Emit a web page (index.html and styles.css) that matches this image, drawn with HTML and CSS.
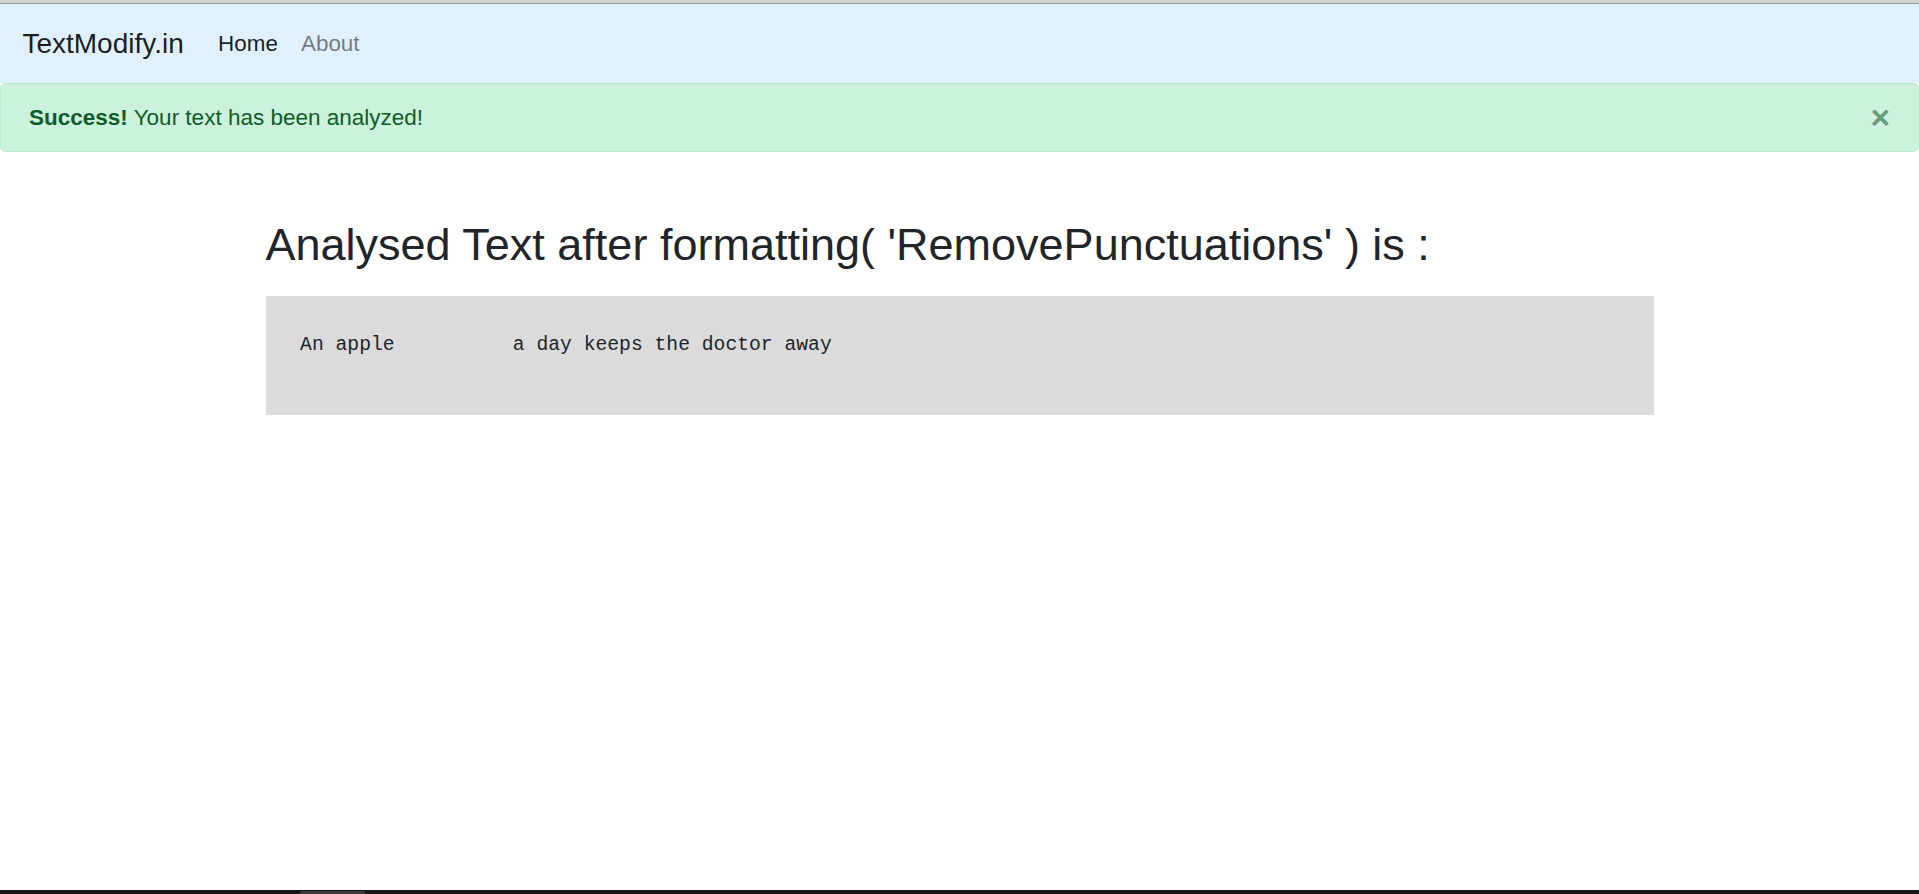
FILE: index.html
```html
<!DOCTYPE html>
<html lang="en">
<head>
<meta charset="utf-8">
<title>TextModify.in</title>
<link rel="stylesheet" href="styles.css">
</head>
<body>
<div class="chrome-top"></div>
<nav class="navbar">
  <a class="brand" href="#">TextModify.in</a>
  <ul class="nav">
    <li><a class="nav-link active" href="#">Home</a></li>
    <li><a class="nav-link" href="#">About</a></li>
  </ul>
</nav>
<div class="alert">
  <strong>Success!</strong> Your text has been analyzed!
  <button class="close" type="button" aria-label="Close">&times;</button>
</div>
<main class="container">
  <h2 class="title">Analysed Text after formatting( 'RemovePunctuations' ) is :</h2>
  <div class="result">
    <pre class="result-text">An apple          a day keeps the doctor away</pre>
  </div>
</main>
<div class="filler"></div>
<div class="taskbar"><span class="task-item"></span></div>
</body>
</html>
```
FILE: styles.css
```css
html, body {
  margin: 0;
  padding: 0;
  height: 100%;
}
body {
  display: flex;
  flex-direction: column;
  font-family: "Liberation Sans", Arial, sans-serif;
  font-size: 22.4px;
  line-height: 1.5;
  color: #212529;
  background: #ffffff;
  overflow: hidden;
}
.chrome-top {
  height: 3px;
  background: #d3d3d6;
  border-bottom: 1px solid #8f8f94;
  flex: none;
}
.navbar {
  flex: none;
  height: 79px;
  box-sizing: border-box;
  display: flex;
  align-items: center;
  padding: 0 22.4px;
  background: #e0f0ff;
}
.brand {
  font-size: 28px;
  line-height: 42px;
  color: rgba(0, 0, 0, 0.9);
  text-decoration: none;
  margin-right: 22.8px;
  white-space: nowrap;
}
.nav {
  display: flex;
  list-style: none;
  margin: 0;
  padding: 0;
}
.nav-link {
  display: block;
  padding: 11.2px 11.6px;
  font-size: 22.4px;
  line-height: 33.6px;
  color: rgba(0, 0, 0, 0.5);
  text-decoration: none;
}
.nav-link.active {
  color: rgba(0, 0, 0, 0.9);
}
.alert {
  flex: none;
  position: relative;
  padding: 16.6px 90px 16.6px 28px;
  border: 1px solid #b9ebcf;
  border-radius: 5.6px;
  background: #caf2dc;
  color: #0f5c2a;
  font-size: 22.5px;
  line-height: 33.6px;
}
.alert strong {
  font-weight: 700;
}
.close {
  position: absolute;
  top: 0;
  right: 0;
  padding: 16.8px 28px;
  border: 0;
  background: transparent;
  font-family: "Liberation Sans", Arial, sans-serif;
  font-size: 33.6px;
  font-weight: 700;
  line-height: 1;
  color: inherit;
  opacity: 0.55;
  text-shadow: 0 1px 0 #fff;
  cursor: pointer;
}
.container {
  flex: none;
  width: 1388px;
  margin: 0 auto;
  padding-top: 66.5px;
}
.title {
  margin: 0 0 24.2px;
  font-size: 45px;
  font-weight: 400;
  line-height: 1.2;
  color: #212529;
}
.result {
  background: #dbdbdb;
  padding: 34.6px 33.6px 32.6px 34.6px;
}
.result-text {
  margin: 0 0 22.4px;
  font-family: "Liberation Mono", "Courier New", monospace;
  font-size: 19.7px;
  line-height: 29.4px;
  color: #212529;
}
.filler {
  flex: 1;
}
.taskbar {
  flex: none;
  height: 4px;
  background: #161616;
  position: relative;
}
.task-item {
  position: absolute;
  left: 300px;
  top: 1px;
  width: 65px;
  height: 3px;
  background: #3a3a3a;
  border-radius: 2px 2px 0 0;
}
```
